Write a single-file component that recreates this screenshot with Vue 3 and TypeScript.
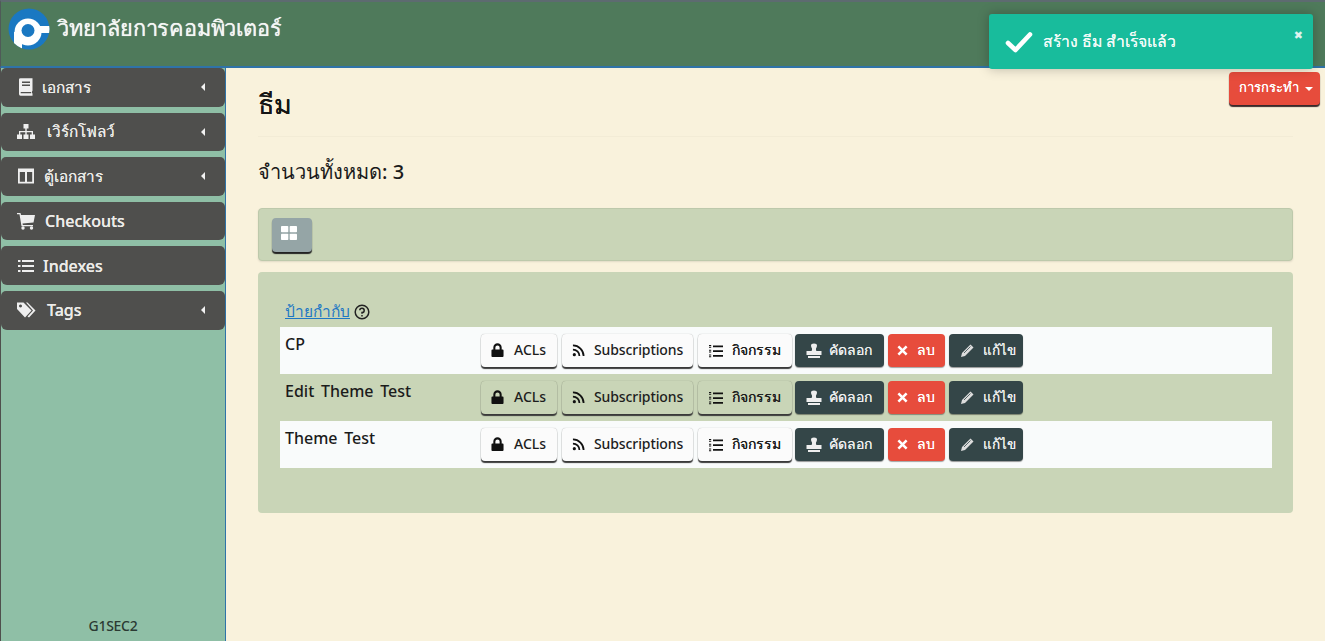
<script setup lang="ts">
interface NavItem { label: string; icon: string; caret: boolean; gap: number; thai: boolean }
const nav: NavItem[] = [
  { label: 'เอกสาร', icon: 'book', caret: true, gap: 6, thai: true },
  { label: 'เวิร์กโฟลว์', icon: 'tree', caret: true, gap: 11, thai: true },
  { label: 'ตู้เอกสาร', icon: 'columns', caret: true, gap: 8, thai: true },
  { label: 'Checkouts', icon: 'cart', caret: false, gap: 9, thai: false },
  { label: 'Indexes', icon: 'list', caret: false, gap: 7, thai: false },
  { label: 'Tags', icon: 'tags', caret: true, gap: 11, thai: false },
]
const themes = ['CP', 'Edit Theme Test', 'Theme Test']
</script>

<template>
  <div class="page">
    <header class="topbar">
      <svg class="logo" viewBox="0 0 42 42" width="42" height="42">
        <defs>
          <clipPath id="logo-disc"><circle cx="21" cy="21" r="20.500" /></clipPath>
        </defs>
        <circle cx="21" cy="21" r="20.500" fill="#1a78c2" />
        <g fill="#fff" clip-path="url(#logo-disc)">
          <circle cx="20" cy="24" r="13.500" />
          <rect x="6" y="24" width="8" height="18" />
          <rect x="30" y="18" width="13" height="7" />
        </g>
        <circle cx="20" cy="22.500" r="6.500" fill="#1a78c2" />
      </svg>
      <span class="brand">วิทยาลัยการคอมพิวเตอร์</span>
    </header>

    <div class="toast">
      <svg class="toast-check" viewBox="0 0 28 22" width="28" height="22">
        <path d="M3 12 L10.500 19 L25 3.500" fill="none" stroke="#fff" stroke-width="4.600" stroke-linecap="round" stroke-linejoin="round" />
      </svg>
      <span class="toast-text">สร้าง ธีม สำเร็จแล้ว</span>
      <span class="toast-close">✖</span>
    </div>

    <div class="body">
      <aside class="sidebar">
        <nav class="nav">
          <a v-for="item in nav" :key="item.label" class="nav-item">
            <svg class="nav-icon" viewBox="0 0 20 18" width="20" height="18" fill="#efefef">
              <template v-if="item.icon === 'book'">
                <path d="M3 1.500 Q3 .2 4.500 .2 H16.500 V12.800 L16 13.500 V15 L16.500 15.600 V17.800 H4.500 Q3 17.800 3 16 Z" />
                <path d="M6 3.500 H14 V5 H6 Z M6 6.500 H14 V8 H6 Z M4.700 14 H15.200 V15.300 H4.700 Z" fill="#4f4f4d" />
              </template>
              <template v-else-if="item.icon === 'tree'">
                <path d="M7.500 1 H12.500 V5.500 H10.700 V8 H17 V11.500 H19 V16 H14 V11.500 H15.700 V9.200 H10.700 V11.500 H12.500 V16 H7.500 V11.500 H9.300 V9.200 H4.300 V11.500 H6 V16 H1 V11.500 H3 V8 H9.300 V5.500 H7.500 Z" />
              </template>
              <template v-else-if="item.icon === 'columns'">
                <path fill-rule="evenodd" d="M2 1.500 H18 V16.500 H2 Z M3.800 5 V14.800 H9 V5 Z M11 5 V14.800 H16.200 V5 Z" />
              </template>
              <template v-else-if="item.icon === 'cart'">
                <path d="M1 1 H4.500 L5 3 H19 L17.500 10.500 L6.500 11.500 L6.800 13 H17 V14.200 H5.500 L3.500 2.300 H1 Z" />
                <circle cx="7" cy="16" r="1.700" /><circle cx="15.500" cy="16" r="1.700" />
              </template>
              <template v-else-if="item.icon === 'list'">
                <path d="M2 3 H4.500 V5 H2 Z M2 8 H4.500 V10 H2 Z M2 13 H4.500 V15 H2 Z M6 3 H18 V5 H6 Z M6 8 H18 V10 H6 Z M6 13 H18 V15 H6 Z" />
              </template>
              <template v-else>
                <path fill-rule="evenodd" d="M1 1.500 H7.500 L15.500 9.500 L9 16.500 L1 8 Z M4.500 3.500 A1.500 1.500 0 1 0 4.510 3.500 Z" />
                <path d="M10 1.500 H11.500 L19.500 9.500 L13 16.500 L11.500 15.500 L17 9.500 Z" />
              </template>
            </svg>
            <span class="nav-label" :class="{ thai: item.thai }" :style="{ marginLeft: item.gap + 'px' }">{{ item.label }}</span>
            <span v-if="item.caret" class="nav-caret"></span>
          </a>
        </nav>
        <div class="side-foot">G1SEC2</div>
      </aside>

      <main class="main">
        <div class="title-row">
          <h1 class="title">ธีม</h1>
          <button class="btn btn-action"><span class="act-text">การกระทำ</span><span class="down"></span></button>
        </div>
        <hr class="rule" />
        <div class="count">จำนวนทั้งหมด: 3</div>

        <div class="well">
          <button class="btn btn-grid" aria-label="grid">
            <svg viewBox="0 0 16 14" width="16" height="14" fill="#fff">
              <rect x="0" y="0" width="7.300" height="6.300" rx=".8" />
              <rect x="8.700" y="0" width="7.300" height="6.300" rx=".8" />
              <rect x="0" y="7.700" width="7.300" height="6.300" rx=".8" />
              <rect x="8.700" y="7.700" width="7.300" height="6.300" rx=".8" />
            </svg>
          </button>
        </div>

        <section class="panel">
          <div class="sort">
            <a class="sort-link">ป้ายกำกับ</a>
            <svg viewBox="0 0 16 16" width="16" height="16" fill="none" stroke="#222" stroke-width="1.500">
              <circle cx="8" cy="8" r="6.800" />
              <path d="M5.800 6.300 A2.200 2.200 0 1 1 8 8.600 V9.800" />
              <path d="M8 11 V12.500" />
            </svg>
          </div>
          <div class="table">
            <div v-for="name in themes" :key="name" class="row">
              <div class="row-name">{{ name }}</div>
              <div class="row-actions">
                <button class="btn btn-light w-acl">
                  <svg viewBox="0 0 14 16" width="13" height="15" fill="#111"><path fill-rule="evenodd" d="M2.500 7 V4.800 A4.500 4.500 0 0 1 11.500 4.800 V7 H12.500 Q13.500 7 13.500 8 V14 Q13.500 15 12.500 15 H1.500 Q.5 15 .5 14 V8 Q.5 7 1.500 7 Z M4.700 7 H9.300 V4.800 A2.300 2.300 0 0 0 4.700 4.800 Z" /></svg>
                  <span class="bl acl-l">ACLs</span>
                </button>
                <button class="btn btn-light w-sub">
                  <svg viewBox="0 0 14 14" width="13" height="13" fill="none" stroke="#111" stroke-width="1.900"><circle cx="2.500" cy="11.500" r="1.700" fill="#111" stroke="none" /><path d="M1 6 A7 7 0 0 1 8 13" /><path d="M1 1.500 A11.500 11.500 0 0 1 12.500 13" /></svg>
                  <span class="bl sub-l">Subscriptions</span>
                </button>
                <button class="btn btn-light w-act">
                  <svg viewBox="0 0 15 14" width="15" height="14" fill="#111"><path d="M5 1.500 H15 V3.200 H5 Z M5 6.200 H15 V7.900 H5 Z M5 11 H15 V12.700 H5 Z M1 1 H3.200 V2 H1 Z M1 2.800 H3.200 V3.800 H1 Z M1 5.700 H3.200 V6.700 H1 Z M1 7.500 H3.200 V8.500 H1 Z M1 10.500 H3.200 V11.500 H1 Z M1 12.300 H3.200 V13.300 H1 Z" /></svg>
                  <span class="bl act-l">กิจกรรม</span>
                </button>
                <button class="btn btn-dark w-copy">
                  <svg viewBox="0 0 16 16" width="16" height="16" fill="#eee"><path d="M5 2.500 Q5 .5 8 .5 T11 2.500 Q11 4 10 5.500 Q9.700 7 10.500 8 H15.500 V12 H.5 V8 H5.500 Q6.300 7 6 5.500 Q5 4 5 2.500 Z M2 13 H14 V15 H2 Z" /></svg>
                  <span class="bl copy-l">คัดลอก</span>
                </button>
                <button class="btn btn-red w-del">
                  <svg viewBox="0 0 12 12" width="11" height="11" fill="none" stroke="#fff" stroke-width="2.800"><path d="M1.500 1.500 L10.500 10.500 M10.500 1.500 L1.500 10.500" /></svg>
                  <span class="bl del-l">ลบ</span>
                </button>
                <button class="btn btn-dark w-edit">
                  <svg viewBox="0 0 15 15" width="15" height="15" fill="#ddd"><path d="M10.500 1.500 L13.500 4.500 L5 13 L1 14 L2 10 Z" /><path d="M4 10 L10.500 3.500" stroke="#344648" stroke-width=".8" /></svg>
                  <span class="bl edit-l">แก้ไข</span>
                </button>
              </div>
            </div>
          </div>
        </section>
      </main>
    </div>
  </div>
</template>

<style>
html, body { margin: 0; padding: 0; }
</style>

<style scoped>
.page {
  position: relative;
  height: 641px;
  width: 1325px;
  overflow: hidden;
  display: flex;
  flex-direction: column;
  font-family: "Noto Sans", "DejaVu Sans", sans-serif;
  color: #1d1d1d;
  background: #f9f2dc;
}
.topbar {
  height: 68px;
  box-sizing: border-box;
  flex: none;
  display: flex;
  align-items: flex-start;
  gap: 7px;
  padding: 6px 0 0 7px;
  background: #4f7a5b;
  border-top: 2px solid #5d6b70;
  border-left: 1px solid #4f5a58;
  border-bottom: 2px solid #2f73a8;
}
.logo { flex: none; }
.brand { color: #f4f6f4; font-size: 21.700px; font-weight: 500; line-height: 40px; letter-spacing: -0.2px; white-space: nowrap; text-shadow: 0 0 .7px currentColor; }
.toast {
  position: absolute;
  left: 989px;
  top: 14px;
  width: 324px;
  height: 55px;
  box-sizing: border-box;
  display: flex;
  align-items: center;
  padding-left: 16px;
  background: #18bc9c;
  border-radius: 3px;
  box-shadow: 0 0 12px rgba(0, 0, 0, 0.25);
  z-index: 5;
  color: #f2fbf8;
}
.toast-check { flex: none; }
.toast-text { margin-left: 10px; font-size: 15.800px; font-weight: 500; white-space: nowrap; text-shadow: 0 0 .6px currentColor; }
.toast-close { position: absolute; right: 10px; top: 13px; font-size: 11px; color: #dff3ee; }
.body { flex: 1; display: flex; min-height: 0; }
.sidebar {
  width: 226px;
  flex: none;
  box-sizing: border-box;
  display: flex;
  flex-direction: column;
  background: #8fbfa6;
  border-left: 1px solid #4f4f4d;
  border-right: 1px solid #2f73a8;
}
.nav { display: flex; flex-direction: column; gap: 6px; flex: 1; }
.nav-item {
  height: 38.600px;
  display: flex;
  align-items: center;
  padding: 0 20px 0 15px;
  background: #4f4f4d;
  border-radius: 5px 5px 6px 6px;
  color: #ecebe8;
  font-size: 16px;
  font-weight: 500;
}
.nav-icon { flex: none; }
.nav-label { white-space: nowrap; text-shadow: 0 0 .5px currentColor; }
.nav-label.thai { font-size: 15.300px; }
.nav-caret {
  margin-left: auto;
  width: 0;
  height: 0;
  border-top: 4px solid transparent;
  border-bottom: 4px solid transparent;
  border-right: 4px solid #f2f2f2;
}
.side-foot {
  height: 27px;
  text-align: center;
  font-size: 14px;
  font-weight: 500;
  letter-spacing: -0.3px;
  color: #2b3a33;
  line-height: 24px;
}
.main { flex: 1; min-width: 0; padding: 3px 32px 0 32px; }
.title-row { display: flex; justify-content: space-between; align-items: flex-start; margin-right: -27px; height: 65px; box-sizing: border-box; }
.title { margin: 13px 0 0; font-size: 27px; font-weight: 500; color: #151515; line-height: 40px; text-shadow: 0 0 .5px currentColor; }
.rule { margin: 0; border: none; border-top: 1px solid #f3ecd6; }
.count { margin-top: 18px; font-size: 20px; font-weight: 500; line-height: 34px; height: 34px; color: #1b1b1b; }
.well {
  margin-top: 19px;
  height: 53px;
  box-sizing: border-box;
  padding: 9px 13px;
  background: #c9d5b7;
  border: 1px solid #bdc9ab;
  border-radius: 4px;
  box-shadow: 0 1px 2px rgba(0, 0, 0, 0.1);
  display: flex;
  align-items: flex-start;
}
.panel {
  margin-top: 11px;
  height: 241px;
  box-sizing: border-box;
  padding: 24px 21px 0 22px;
  background: #c9d5b7;
  border-radius: 4px;
}
.sort { display: flex; align-items: center; gap: 4px; height: 31px; padding-left: 5px; }
.sort-link { color: #1f78c4; text-decoration: underline; font-size: 15.500px; font-weight: 500; }
.table { display: flex; flex-direction: column; }
.row {
  height: 47px;
  box-sizing: border-box;
  display: flex;
  padding-left: 5px;
}
.row:nth-child(odd) { background: #f9fbfb; }
.row-name { width: 196px; flex: none; font-size: 16px; font-weight: 500; word-spacing: 2.500px; line-height: 20px; padding-top: 7px; color: #1b1b1b; white-space: nowrap; }
.row-actions { display: flex; padding-top: 7px; height: 33px; }
.btn {
  font-family: inherit;
  height: 33px;
  box-sizing: border-box;
  padding: 0;
  border: none;
  border-radius: 4px;
  display: flex;
  align-items: center;
  flex: none;
  cursor: pointer;
  font-size: 14px;
  font-weight: 500;
}
.btn-light { background: transparent; color: #1d1d1d; box-shadow: 0 2px 1px #3a3a3a, 0 0 1px rgba(0, 0, 0, .35); padding-left: 10px; }
.row:nth-child(odd) .btn-light { background: #fbfbfb; }
.btn-dark { background: #344648; color: #eceeee; box-shadow: 0 1px 1px rgba(0, 0, 0, .4); padding-left: 11px; }
.btn-red { background: #e74c3c; color: #fff; box-shadow: 0 1px 1px rgba(0, 0, 0, .35); padding-left: 9px; }
.bl { white-space: nowrap; margin-top: -2px; }
.w-acl { width: 76px; margin-right: 5px; }
.w-sub { width: 131px; margin-right: 5px; }
.w-act { width: 94px; margin-right: 3px; }
.w-copy { width: 89px; margin-right: 4px; }
.w-del { width: 57px; margin-right: 4px; }
.w-edit { width: 74px; }
.acl-l { margin-left: 10px; }
.sub-l { margin-left: 9px; letter-spacing: -0.1px; }
.act-l { margin-left: 9px; text-shadow: 0 0 .5px currentColor; }
.copy-l { margin-left: 7px; text-shadow: 0 0 .5px currentColor; }
.del-l { margin-left: 9px; text-shadow: 0 0 .5px currentColor; }
.edit-l { margin-left: 8px; font-size: 13.500px; text-shadow: 0 0 .5px currentColor; }
.btn-action {
  width: 91px;
  height: 33px;
  margin-top: 1px;
  justify-content: flex-start;
  padding-left: 10px;
  gap: 6px;
  background: #e74c3c;
  color: #fff;
  box-shadow: 0 2px 1px #3a2a2a;
}
.act-text { font-size: 13px; margin-top: -2px; white-space: nowrap; text-shadow: 0 0 .5px currentColor; }
.down {
  width: 0;
  height: 0;
  border-left: 4px solid transparent;
  border-right: 4px solid transparent;
  border-top: 4px solid #fff;
}
.btn-grid {
  width: 40px;
  height: 34px;
  justify-content: center;
  padding-bottom: 4px;
  padding-right: 6px;
  background: #95a5a6;
  box-shadow: 0 2px 1px #222;
}
</style>
